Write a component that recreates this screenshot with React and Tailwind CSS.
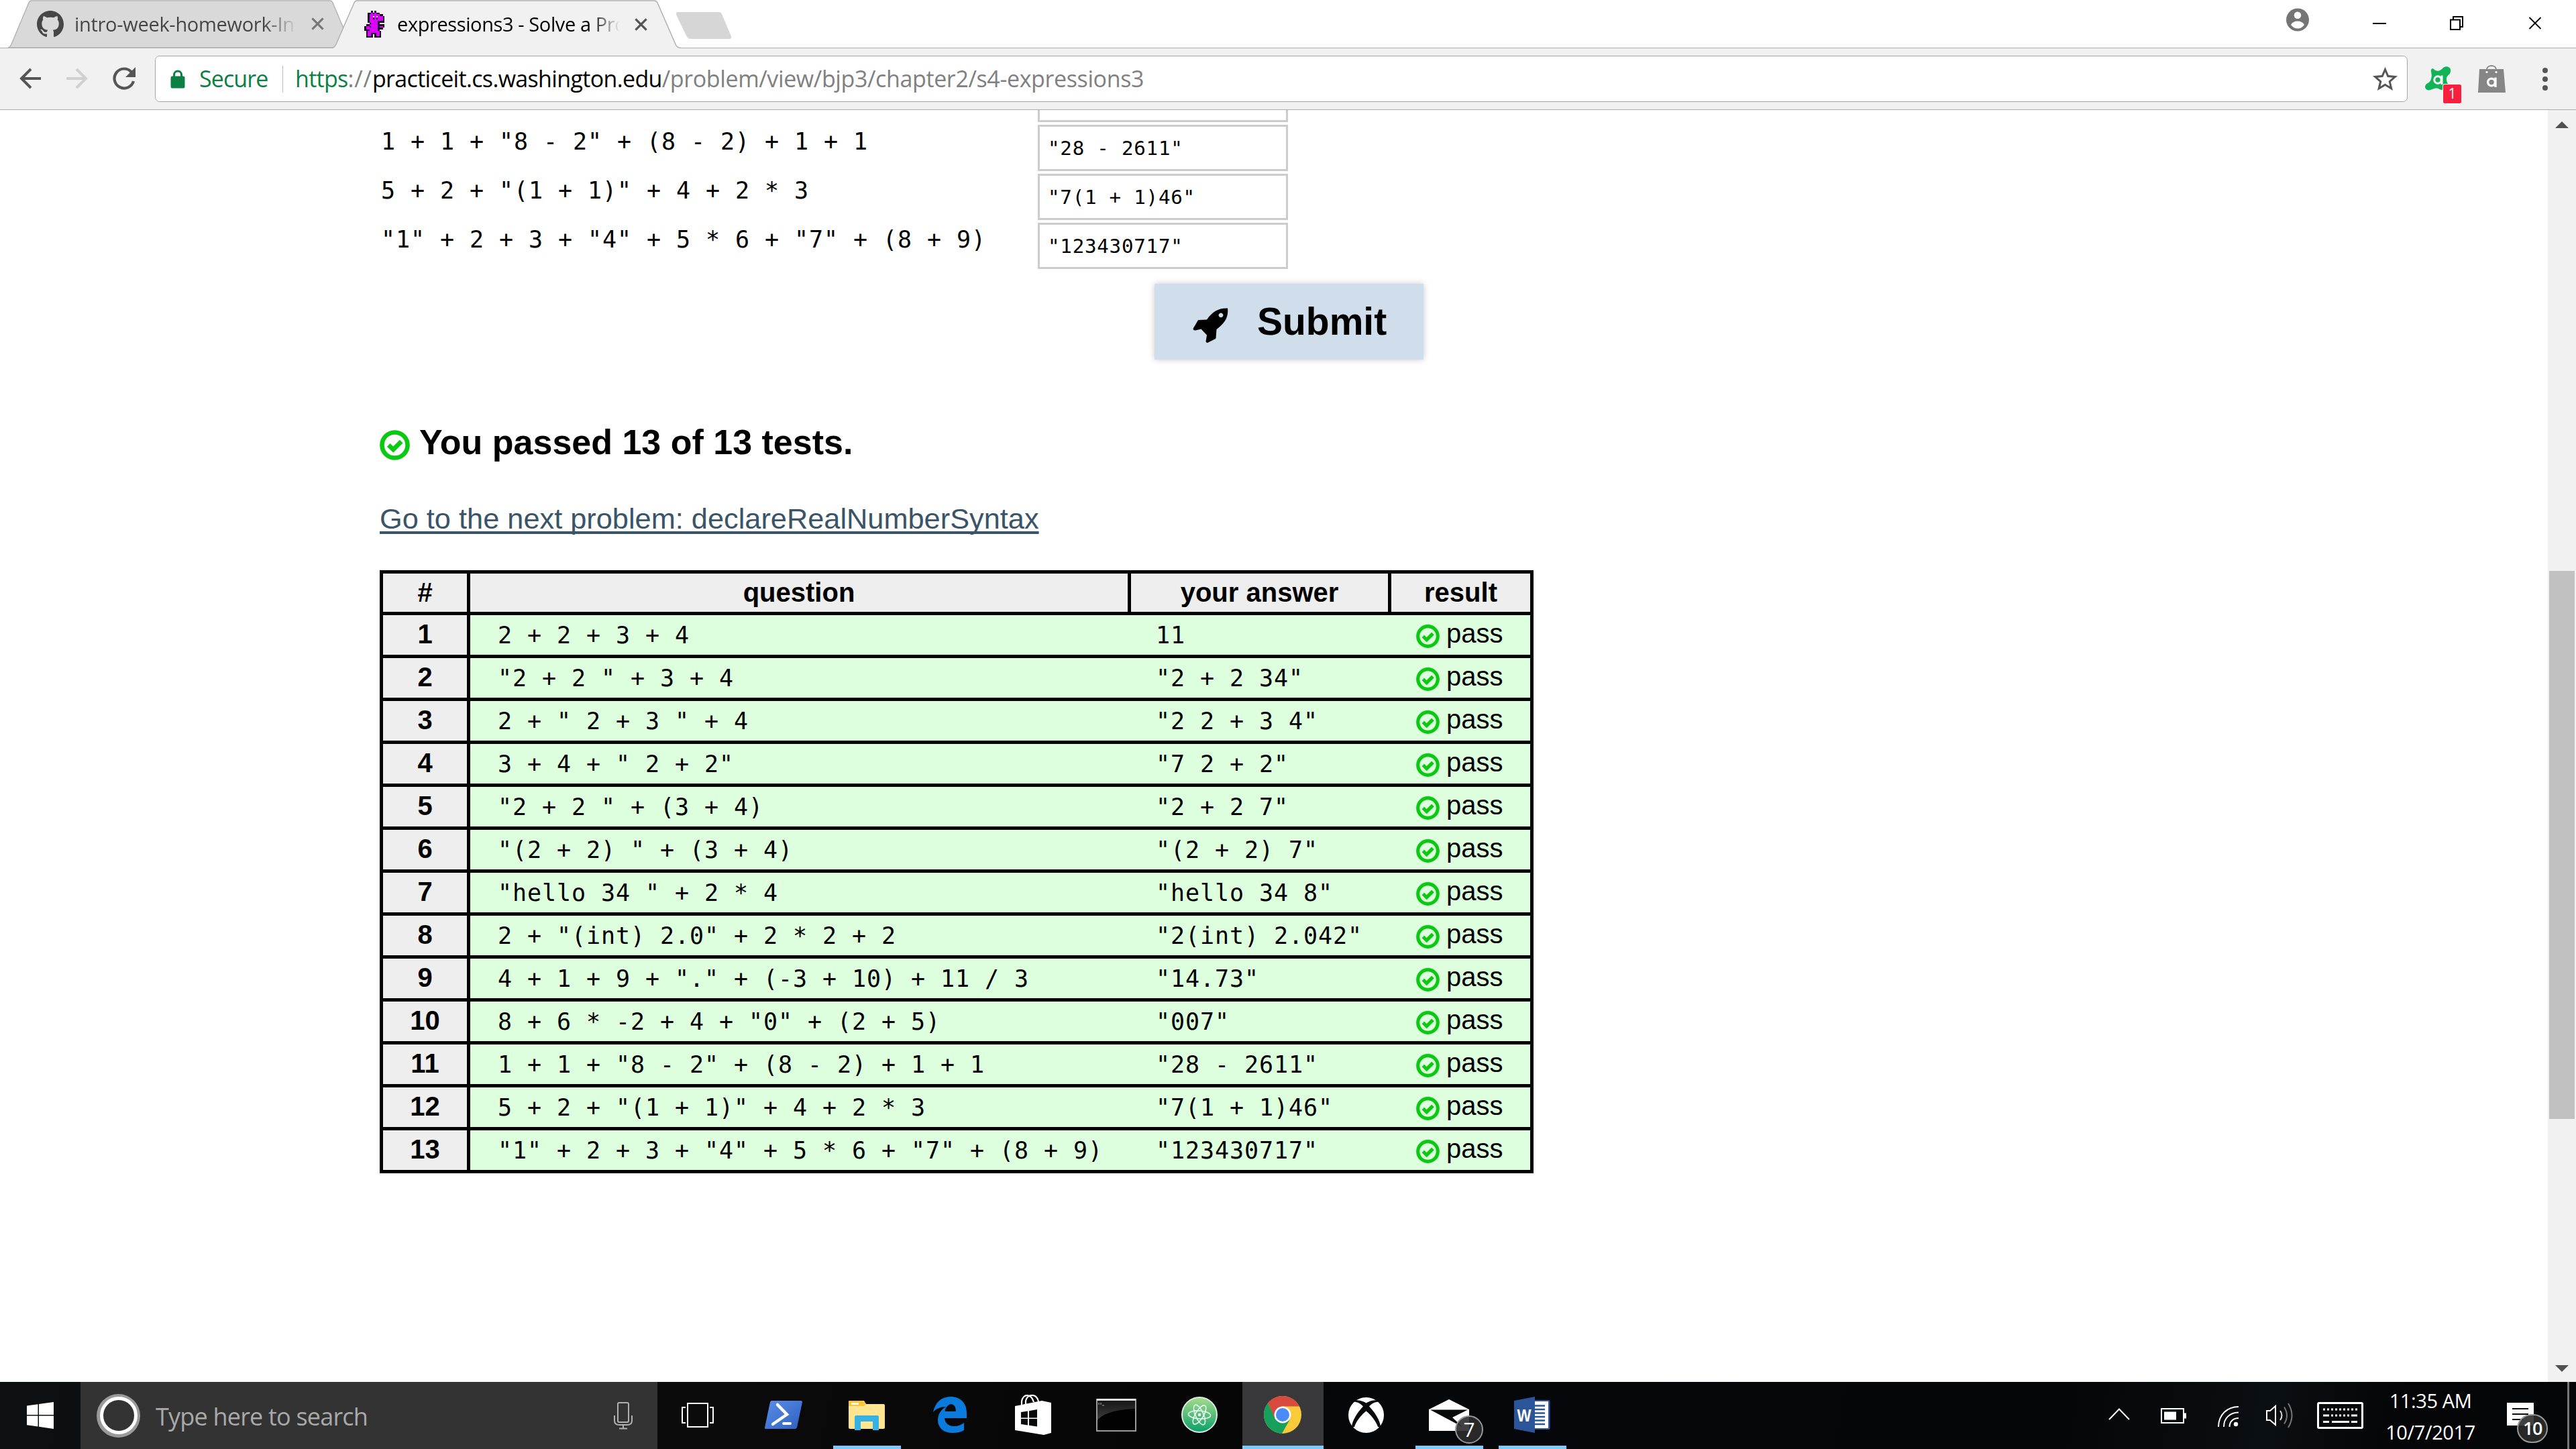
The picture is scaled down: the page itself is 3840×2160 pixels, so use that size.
import React from "react";

const UI = "font-['Open_Sans','Noto_Sans',sans-serif]";
const MONO = "font-['DejaVu_Sans_Mono','Liberation_Mono',monospace]";
const ARIAL = "font-['Liberation_Sans',Arial,sans-serif]";

const INPUT_ROWS = [
  ['1 + 1 + "8 - 2" + (8 - 2) + 1 + 1', '"28 - 2611"'],
  ['5 + 2 + "(1 + 1)" + 4 + 2 * 3', '"7(1 + 1)46"'],
  ['"1" + 2 + 3 + "4" + 5 * 6 + "7" + (8 + 9)', '"123430717"'],
];

const RESULTS = [
  ["2 + 2 + 3 + 4", "11"],
  ['"2 + 2 " + 3 + 4', '"2 + 2 34"'],
  ['2 + " 2 + 3 " + 4', '"2 2 + 3 4"'],
  ['3 + 4 + " 2 + 2"', '"7 2 + 2"'],
  ['"2 + 2 " + (3 + 4)', '"2 + 2 7"'],
  ['"(2 + 2) " + (3 + 4)', '"(2 + 2) 7"'],
  ['"hello 34 " + 2 * 4', '"hello 34 8"'],
  ['2 + "(int) 2.0" + 2 * 2 + 2', '"2(int) 2.042"'],
  ['4 + 1 + 9 + "." + (-3 + 10) + 11 / 3', '"14.73"'],
  ['8 + 6 * -2 + 4 + "0" + (2 + 5)', '"007"'],
  ...INPUT_ROWS,
];

const SPRITE = [
  "....X.X.....",
  "..XXoXoXX...",
  "..XooooooXX.",
  "..XooWoWoooX",
  "..XooXoXoooX",
  "..XooooooooX",
  "..XoooooXXXX",
  "...XooooX...",
  ".XXoooooXXXX",
  "XooXooooXooX",
  "XoooooooXXX.",
  "XXXoooooX...",
  ".XoooooooX..",
  ".XooXXXooX..",
  ".XooX.XooX..",
  ".XXXX.XXXX..",
];
const SPRITE_FILL = { X: "#1a0020", o: "#dd00ff", W: "#ffffff" };

function Sprite() {
  return (
    <svg className="h-[40px] w-[30px] shrink-0" viewBox="0 0 12 16" shapeRendering="crispEdges">
      {SPRITE.flatMap((row, y) =>
        [...row].map((c, x) => (SPRITE_FILL[c] ? <rect key={x + "-" + y} x={x} y={y} width="1.02" height="1.02" fill={SPRITE_FILL[c]} /> : null))
      )}
    </svg>
  );
}

function GitHub() {
  return (
    <svg className="h-[40px] w-[40px] shrink-0" viewBox="0 0 16 16" fill="#474747">
      <path d="M8 0C3.58 0 0 3.58 0 8c0 3.54 2.29 6.53 5.47 7.59.4.07.55-.17.55-.38 0-.19-.01-.82-.01-1.49-2.01.37-2.53-.49-2.69-.94-.09-.23-.48-.94-.82-1.13-.28-.15-.68-.52-.01-.53.63-.01 1.08.58 1.23.82.72 1.21 1.87.87 2.33.66.07-.52.28-.87.51-1.07-1.78-.2-3.64-.89-3.64-3.95 0-.87.31-1.59.82-2.15-.08-.2-.36-1.02.08-2.12 0 0 .67-.21 2.2.82.64-.18 1.32-.27 2-.27s1.36.09 2 .27c1.53-1.04 2.2-.82 2.2-.82.44 1.1.16 1.92.08 2.12.51.56.82 1.27.82 2.15 0 3.07-1.87 3.75-3.65 3.95.29.25.54.73.54 1.48 0 1.07-.01 1.93-.01 2.2 0 .21.15.46.55.38A8.01 8.01 0 0 0 16 8c0-4.42-3.58-8-8-8z" />
    </svg>
  );
}

function CloseX({ className, color, w }) {
  return (
    <svg className={className} viewBox="0 0 20 20" stroke={color} strokeWidth={w} fill="none">
      <path d="M1.5 1.5L18.5 18.5M18.5 1.5L1.5 18.5" />
    </svg>
  );
}

function TabStrip() {
  return (
    <div className="flex h-[72px] items-start bg-[linear-gradient(to_bottom,#fff_71px,#aeaeae_71px)]">
      <div className="relative ml-[12px] h-[71px] w-[510px] shrink-0">
        <svg className="absolute inset-0 h-full w-full" viewBox="0 0 510 71">
          <path d="M0 71C3 70 4 68 5 66L31 4C32 2 33 1 35 1H480C482 1 483 2 484 4L510 66V71Z" fill="#d9d9d9" stroke="#b4b4b4" strokeWidth="1.5" />
        </svg>
        <div className="relative flex h-[71px] items-center pl-[43px]">
          <GitHub />
          <span className={`ml-[16px] w-[336px] whitespace-nowrap bg-[linear-gradient(to_right,#444_84%,transparent_99%)] bg-clip-text text-[29px] tracking-[-0.3px] text-transparent ${UI}`}>
            intro-week-homework-In
          </span>
          <CloseX className="ml-[17px] h-[19px] w-[19px]" color="#777" w="3.2" />
        </div>
      </div>
      <div className="relative -ml-[26px] h-[72px] w-[519px] shrink-0">
        <svg className="absolute inset-0 h-full w-full" viewBox="0 0 519 72">
          <path d="M0 72C3 70 4 68 5 66L32 4C33 2 34 1 36 1H479C481 1 483 2 484 4L511 66C512 69 514 71 519 72Z" fill="#f1f1f1" />
          <path d="M0 71.5C3 70 4 68 5 66L32 4C33 2 34 1 36 1H479C481 1 483 2 484 4L511 66C512 69 514 71 519 71.5" fill="none" stroke="#b0b0b0" strokeWidth="1.5" />
        </svg>
        <div className="relative flex h-[72px] items-center pl-[47px]">
          <Sprite />
          <span className={`ml-[19px] w-[346px] whitespace-nowrap bg-[linear-gradient(to_right,#000_83%,transparent_96%)] bg-clip-text text-[29px] tracking-[-0.4px] text-transparent ${UI}`}>
            expressions3 - Solve a Pro
          </span>
          <CloseX className="ml-[8px] h-[19px] w-[19px]" color="#555" w="3.4" />
        </div>
      </div>
      <svg className="-ml-[8px] mt-[18px] h-[41px] w-[84px]" viewBox="0 0 84 41">
        <path d="M3 0H65Q68 0 69 3L83 36Q84 40 80 40H23Q19 40 17 37L1 4Q0 0 3 0Z" fill="#d6d6d6" />
      </svg>
      <div className="ml-auto flex items-start pr-[51px]">
        <svg className="mt-[12px] mr-[95px] h-[35px] w-[34px]" viewBox="0 0 34 35">
          <circle cx="17" cy="17.5" r="17" fill="#757575" />
          <circle cx="17" cy="10.8" r="5.3" fill="#fff" />
          <path d="M7 25Q10 19.5 17 19.5T27 25Q23 30.5 17 30.5T7 25Z" fill="#fff" />
        </svg>
        <div className="mt-[34px] mr-[95px] h-[2px] w-[20px] bg-black" />
        <svg className="mt-[24px] mr-[97px] h-[21px] w-[20px]" viewBox="0 0 20 21" fill="none" stroke="#000" strokeWidth="2">
          <path d="M1 5.5H15V20H1ZM5 5V1H19V16H15" />
        </svg>
        <CloseX className="mt-[24px] h-[21px] w-[20px]" color="#000" w="1.8" />
      </div>
    </div>
  );
}

function Toolbar() {
  return (
    <div className="flex h-[92px] items-center border-b border-[#ababab] bg-[#f1f1f1]">
      <svg className="ml-[29px] -mt-[1px] h-[32px] w-[33px]" viewBox="0 0 33 32" fill="none" stroke="#555" strokeWidth="4">
        <path d="M32 16H3M17 2L3 16L17 30" />
      </svg>
      <svg className="ml-[36px] -mt-[1px] h-[32px] w-[33px]" viewBox="0 0 33 32" fill="none" stroke="#d0d0d0" strokeWidth="4">
        <path d="M1 16H30M16 2L30 16L16 30" />
      </svg>
      <svg className="ml-[37px] -mt-[1px] h-[34px] w-[34px]" viewBox="0 0 34 34" fill="none" stroke="#555" strokeWidth="4.2">
        <path d="M28 7.5A14.5 14.5 0 1 0 31 21" />
        <path d="M34 0V15H19Z" fill="#555" stroke="none" />
      </svg>
      <div className={`ml-[29px] flex h-[69px] w-[3358px] items-center rounded-[7px] border border-[#a6a6a6] bg-white text-[34px] ${UI}`}>
        <svg className="ml-[22px] h-[28px] w-[22px]" viewBox="0 0 22 28">
          <path d="M5.5 11V7.5a5.5 5.5 0 0 1 11 0V11" fill="none" stroke="#0b8043" strokeWidth="3" />
          <rect x="0.5" y="9.5" width="21" height="18" rx="2.5" fill="#0b8043" />
        </svg>
        <span className="ml-[21px] w-[106px] tracking-[-0.9px] text-[#0b8043]">Secure</span>
        <div className="ml-[18px] h-[40px] w-px bg-[#bbb]" />
        <div className="ml-[18px] flex whitespace-pre">
          <span className="tracking-[-0.7px] text-[#0b8043]">https</span>
          <span className="tracking-[0.8px] text-[#808080]">://</span>
          <span className="tracking-[-0.66px] text-black">practiceit.cs.washington.edu</span>
          <span className="tracking-[-0.38px] text-[#808080]">/problem/view/bjp3/chapter2/s4-expressions3</span>
        </div>
        <svg className="mr-[14px] ml-auto h-[37px] w-[37px]" viewBox="0 0 24 24" fill="#555">
          <path d="M24 9.2l-8.6-.7L12 .5 8.6 8.5 0 9.2l6.5 5.7-2 8.4L12 18.8l7.4 4.5-2-8.4L24 9.2zM12 16.6l-4.5 2.7 1.2-5.1-4-3.4 5.2-.5L12 5.4l2.1 4.9 5.2.5-4 3.4 1.2 5.1z" />
        </svg>
      </div>
      <div className="relative ml-[26px] h-[40px] w-[40px]">
        <svg className="absolute inset-0 h-[40px] w-[40px]" viewBox="0 0 40 40">
          <path d="M9 9C8 4 12 3 14 6C18 9 23 8 27 3C32-1 39 2 38 8C38 14 31 14 32 21C32 26 38 30 34 33C28 35 25 38 20 34C12 32 9 38 3 36C-2 33 0 28 4 26C9 24 11 16 9 9Z" fill="#10b457" />
          <circle cx="19" cy="21" r="5.2" fill="none" stroke="#fff" strokeWidth="3" />
          <path d="M25 14.5V28" stroke="#fff" strokeWidth="3" />
        </svg>
        <div className={`absolute top-[27px] left-[26px] flex h-[30px] w-[29px] items-center justify-center rounded-[3px] border border-white bg-[#f8203e] text-[21px] text-white ${UI}`}>1</div>
      </div>
      <svg className="ml-[39px] h-[42px] w-[41px]" viewBox="0 0 41 42">
        <path d="M2 6H38L41 41H0Z" fill="#868686" />
        <path d="M13 10V7C13-1 27-1 27 7V10" fill="none" stroke="#868686" strokeWidth="2" />
        <circle cx="13" cy="10.5" r="1.6" fill="#fff" />
        <circle cx="27" cy="10.5" r="1.6" fill="#fff" />
        <circle cx="20" cy="25.5" r="5.4" fill="none" stroke="#fff" strokeWidth="3.3" />
        <path d="M26 18.5V33" stroke="#fff" strokeWidth="3.3" />
      </svg>
      <div className="ml-[55px] flex flex-col gap-[5px]">
        <div className="h-[8px] w-[8px] rounded-full bg-[#555]" />
        <div className="h-[8px] w-[8px] rounded-full bg-[#555]" />
        <div className="h-[8px] w-[8px] rounded-full bg-[#555]" />
      </div>
    </div>
  );
}

function CheckIcon({ className }) {
  return (
    <svg className={className} viewBox="0 0 34 34" fill="none" stroke="#0bc912">
      <circle cx="17" cy="17" r="14.4" strokeWidth="5" />
      <path d="M10 17L15.3 22L24.3 13" strokeWidth="5" />
    </svg>
  );
}

function Problem() {
  return (
    <div className={`flex min-w-0 flex-1 flex-col pl-[566px] text-black ${ARIAL}`}>
      <div className="flex flex-col gap-[4px]">
        <div className="ml-[981px] h-[18px] w-[373px] border-[3px] border-t-0 border-[#ccc]" />
        {INPUT_ROWS.map(([q, a]) => (
          <div key={q} className={`flex h-[69px] items-start whitespace-pre ${MONO}`}>
            <span className="w-[981px] pl-[2px] text-[35px] leading-[50px] tracking-[0.93px]">{q}</span>
            <div className="flex h-[69px] w-[373px] items-center border-[3px] border-[#ccc] pt-[2px] pl-[12px] text-[29.2px] tracking-[0.75px]">{a}</div>
          </div>
        ))}
      </div>
      <div className="mt-[22px] ml-[1155px] flex h-[113px] w-[401px] items-center bg-[#cfdeea] pl-[57px] shadow-[0_0_9px_rgba(0,0,0,0.22)]">
        <svg className="mt-[10px] h-[52px] w-[53px]" viewBox="0 0 53 52">
          <path fillRule="evenodd" d="M52 .5C54 15 46 24 35.500 32L34.500 45Q34 46 33 46.500L22 52Q20 52 19.500 50L21 40.500L12.500 31.500L4 33.500Q1 34 .5 31L7.500 19Q8 18 9 18L21 17.500C29 6 38 0 52 .5ZM42 7.500a3.400 3.400 0 1 0 .01 0Z" />
        </svg>
        <span className="ml-[43px] -mt-[2px] text-[57px] leading-[60px] font-bold">Submit</span>
      </div>
      <div className="mt-[93px] flex h-[60px] items-center">
        <CheckIcon className="mt-[9px] h-[45px] w-[45px]" />
        <span className="ml-[14px] text-[52px] font-bold whitespace-nowrap">You passed 13 of 13 tests.</span>
      </div>
      <a className="mt-[59px] flex h-[50px] items-center self-start text-[43.33px] whitespace-nowrap text-[#3a5469] underline decoration-[4px] underline-offset-[4px] [text-decoration-skip-ink:none]">
        Go to the next problem: declareRealNumberSyntax
      </a>
      <div className="mt-[52px] flex w-[1720px] flex-col border-[5px] border-black text-[40px]">
        <div className="flex h-[57px] bg-[#eee] text-center leading-[57px] font-bold">
          <div className="w-[130px] border-r-[5px] border-black">#</div>
          <div className="w-[985px] border-r-[5px] border-black">question</div>
          <div className="w-[388px] border-r-[5px] border-black">your answer</div>
          <div className="w-[207px]">result</div>
        </div>
        {RESULTS.map(([q, a], i) => (
          <div key={i} className="flex h-[64px] border-t-[5px] border-black bg-[#ddffdd] whitespace-pre">
            <div className="w-[130px] border-r-[5px] border-black bg-[#eee] text-center leading-[56px] font-bold">{i + 1}</div>
            <div className={`w-[985px] pl-[41px] text-[35px] leading-[61px] tracking-[0.93px] ${MONO}`}>{q}</div>
            <div className={`w-[388px] pl-[37px] text-[35px] leading-[61px] tracking-[0.93px] ${MONO}`}>{a}</div>
            <div className="flex items-start pl-[37px]">
              <CheckIcon className="mt-[14px] h-[35px] w-[35px]" />
              <span className="ml-[10px] leading-[55px]">pass</span>
            </div>
          </div>
        ))}
      </div>
    </div>
  );
}

function Scrollbar() {
  return (
    <div className="flex w-[42px] shrink-0 flex-col items-center bg-[#f1f1f1]">
      <svg className="mt-[17px] h-[10px] w-[20px]" viewBox="0 0 20 10"><path d="M0 10L10 0L20 10Z" fill="#505050" /></svg>
      <div className="mt-[660px] h-[817px] w-[38px] bg-[#c1c1c1]" />
      <svg className="mt-auto mb-[15px] h-[10px] w-[20px]" viewBox="0 0 20 10"><path d="M0 0L10 10L20 0Z" fill="#505050" /></svg>
    </div>
  );
}

function Slot({ children, active, open }) {
  return (
    <div className="flex h-full w-[124px] shrink-0 flex-col items-center">
      <div className={`flex min-h-0 items-center justify-center pt-[3px] ${active ? "h-[95px] w-[121px] bg-[#39393b]" : "h-[95px] w-[101px]"}`}>{children}</div>
      {(open || active) && <div className={`h-[5px] bg-[#7ecbfb] ${active ? "w-[121px]" : "w-[101px]"}`} />}
    </div>
  );
}

function Badge({ children, className }) {
  return (
    <div className={`absolute flex items-center justify-center rounded-full border-2 border-[#999] bg-[#2c2c2c]/90 text-white ${UI} ${className}`}>{children}</div>
  );
}

function TaskApps() {
  return (
    <>
      <div className="flex h-full w-[126px] shrink-0 items-center justify-center pr-[6px]">
        <svg className="h-[38px] w-[48px]" viewBox="0 0 48 38" fill="none" stroke="#fff" strokeWidth="2">
          <path d="M9 1H39V36H9ZM6 7H1V30H6M42 7H47V30H42" />
        </svg>
      </div>
      <Slot>
        <svg className="h-[42px] w-[56px]" viewBox="0 0 56 42">
          <defs><linearGradient id="ps" x1="0" y1="0" x2="1" y2="1"><stop offset="0" stopColor="#5a8ee6" /><stop offset="1" stopColor="#2f5fc0" /></linearGradient></defs>
          <path d="M10 0H54Q56 0 56 2L48 40Q47 42 45 42H1Q0 42 0 40L8 2Q9 0 10 0Z" fill="url(#ps)" />
          <path d="M19 6L33 20.500L12 35" fill="none" stroke="#fff" strokeWidth="4.500" strokeLinecap="round" />
          <path d="M28 34H38" stroke="#fff" strokeWidth="4" strokeLinecap="round" />
        </svg>
      </Slot>
      <Slot open>
        <svg className="h-[45px] w-[54px]" viewBox="0 0 54 45">
          <path d="M1 1H23L26 6H52Q54 6 54 8V41Q54 43 52 43H2Q0 43 0 41V2Z" fill="#ffe58f" />
          <path d="M1 1H22L26 6L23 9H0V2Z" fill="#fbc73a" />
          <rect x="4" y="4" width="11" height="3" fill="#fff" />
          <path d="M9 45V25Q9 23 11 23H43Q45 23 45 25V45H36V32H18V45Z" fill="#35b1e6" />
        </svg>
      </Slot>
      <Slot>
        <svg className="h-[54px] w-[50px]" viewBox="0 0 50 54">
          <path fillRule="evenodd" d="M0 23C3 9 12 0 26 0C41 0 50 10 50 24V32H17C18 41 25 44 31 44C37 44 42 42 46 39V50C41 53 35 54 29 54C15 54 7 46 7 35C7 26 12 19 19 15C11 15 4 18 0 23ZM17.500 22H34C34 15 31 11 26 11C21 13 18 17 17.500 22Z" fill="#0a7bdc" />
        </svg>
      </Slot>
      <Slot>
        <svg className="h-[60px] w-[54px]" viewBox="0 0 54 60">
          <path d="M0 17L40 9L54 12V57L43 60L0 53Z" fill="#fff" />
          <path d="M10 16V10C12-2 24-2 28 11M16 14V9C19-2 32-2 35 10" fill="none" stroke="#fff" strokeWidth="2.200" />
          <path d="M9 26L19 24.500V34.500H9ZM21 24.200L33 22V34.500H21ZM9 36H19V45.500L9 44ZM21 36H33V47.500L21 45.700Z" fill="#08090a" />
        </svg>
      </Slot>
      <Slot>
        <svg className="h-[49px] w-[60px]" viewBox="0 0 60 49">
          <defs><linearGradient id="cmd" x1="0" y1="0" x2="0" y2="1"><stop offset="0" stopColor="#222" /><stop offset="1" stopColor="#666" /></linearGradient></defs>
          <rect x="1" y="1" width="58" height="47" fill="#020202" stroke="#9a9a9a" strokeWidth="2" />
          <path d="M2 2H58V15C30 16 10 22 2 32Z" fill="url(#cmd)" opacity=".6" />
          <path d="M1 1.500H59" stroke="#ddd" strokeWidth="3" />
          <path d="M4 6V9M7 6V9M9 10H12" stroke="#aaa" />
        </svg>
      </Slot>
      <Slot>
        <svg className="h-[54px] w-[54px]" viewBox="0 0 54 54">
          <defs><linearGradient id="atom" x1="0" y1="0" x2="0" y2="1"><stop offset="0" stopColor="#a6dc8c" /><stop offset="1" stopColor="#0a9f6a" /></linearGradient></defs>
          <circle cx="27" cy="27" r="26" fill="url(#atom)" stroke="#dfe9e2" strokeWidth="2" />
          <g fill="none" stroke="#eafaf0" strokeWidth="1.600">
            <ellipse cx="27" cy="27" rx="16.500" ry="6" transform="rotate(4 27 27)" />
            <ellipse cx="27" cy="27" rx="16" ry="6" transform="rotate(66 27 27)" />
            <ellipse cx="27" cy="27" rx="16" ry="6" transform="rotate(121 27 27)" />
          </g>
          <circle cx="27" cy="27" r="2.200" fill="#fff" />
        </svg>
      </Slot>
      <Slot active>
        <svg className="h-[56px] w-[56px]" viewBox="0 0 56 56">
          <circle cx="28" cy="28" r="28" fill="#f9cb3a" />
          <path d="M28 15.500H52.900A28 28 0 0 0 6 10.600L16 34Z" fill="#d94a3e" />
          <path d="M6.100 10.600A28 28 0 0 0 27 56L39 34.500L17 34.500Z" fill="#17a05c" />
          <circle cx="28" cy="28" r="12.500" fill="#fff" />
          <circle cx="28" cy="28" r="10" fill="#4b8bf5" />
        </svg>
      </Slot>
      <Slot>
        <svg className="h-[53px] w-[53px]" viewBox="0 0 53 53">
          <circle cx="26.500" cy="26.500" r="26.500" fill="#fff" />
          <path d="M9 4.500C14 3.500 21 5 26.500 8.500C32 5 39 3.500 44 4.500L46 6.500C40 6 34 10 31 13.500C38 21 48 34 48 45L44 44C41 35 33 25.500 26.500 20.500C20 25.500 12 35 9 44L5 45C5 34 15 21 22 13.500C19 10 13 6 7 6.500Z" fill="#08090a" />
        </svg>
      </Slot>
      <Slot open>
        <div className="relative h-[47px] w-[60px]">
          <svg className="h-[47px] w-[60px]" viewBox="0 0 60 47">
            <path d="M0 15L30 0L60 15V47H0Z" fill="#fff" />
            <path d="M2 15.500H58L35 27L50 41Z" fill="#08090a" />
          </svg>
          <Badge className="top-[24px] left-[39px] h-[42px] w-[42px] text-[30px]">7</Badge>
        </div>
      </Slot>
      <Slot open>
        <svg className="h-[54px] w-[54px]" viewBox="0 0 54 54">
          <rect x="28" y="5" width="25.500" height="44" rx="2" fill="#2a5699" />
          <rect x="30" y="7" width="21" height="40" fill="#fff" />
          <path d="M31 13.500H46M31 19H46M31 24.500H46M31 30H46M31 35.500H46M31 41H46" stroke="#2a5699" strokeWidth="2.400" />
          <path d="M0 6L31 0V54L0 48Z" fill="#2a5699" />
          <text x="15" y="36.500" textAnchor="middle" fontFamily="Liberation Sans" fontWeight="700" fontSize="25" textLength="21" lengthAdjust="spacingAndGlyphs" fill="#fff">W</text>
        </svg>
      </Slot>
    </>
  );
}

function Tray() {
  return (
    <div className="ml-auto flex h-full items-center">
      <svg className="mr-[46px] mt-[-5px] h-[18px] w-[32px]" viewBox="0 0 32 18" fill="none" stroke="#fff" strokeWidth="2"><path d="M1 17L16 1.500L31 17" /></svg>
      <svg className="mr-[47px] h-[23px] w-[38px]" viewBox="0 0 38 23">
        <path d="M1 1H34V22H1Z" fill="none" stroke="#fff" strokeWidth="2" />
        <rect x="5" y="5.500" width="18" height="12" fill="#fff" /><rect x="35" y="7.500" width="3" height="8" fill="#fff" />
      </svg>
      <svg className="mr-[41px] mt-[3px] h-[31px] w-[31px]" viewBox="0 0 31 31" fill="none" stroke="#fff" strokeWidth="2">
        <path d="M1 31C1 13 14 1 31 1M9 31C9 18 18 9.500 31 9.500M17.500 31C17.500 23 23 18 31 18" /><circle cx="27" cy="27" r="3.200" fill="#fff" stroke="none" />
      </svg>
      <svg className="mr-[35px] h-[38px] w-[41px]" viewBox="0 0 41 38" fill="none" strokeWidth="2">
        <path d="M1 12H6L14 5V33L6 26H1Z" stroke="#fff" /><path d="M21 12Q26 19 21 26" stroke="#ddd" /><path d="M27 6.500Q35 19 27 31.500M33 1Q44 19 33 37" stroke="#777" />
      </svg>
      <svg className="mr-[31px] h-[40px] w-[69px]" viewBox="0 0 69 40" fill="none" stroke="#fff">
        <rect x="1.500" y="1.500" width="66" height="37" rx="1.500" strokeWidth="3" />
        <path d="M9 11H60" strokeWidth="3" strokeDasharray="3 3" /><path d="M9 20H18M51 20H60M9 29.500H18M22 29.500H48M51 29.500H60" strokeWidth="3" /><path d="M21 20H48" strokeWidth="3" strokeDasharray="3 3" />
      </svg>
      <div className={`mt-[3px] flex w-[138px] flex-col text-center text-[29px] leading-[46.700px] tracking-[-0.4px] whitespace-nowrap text-white ${UI}`}>
        <span>11:35 AM</span>
        <span>10/7/2017</span>
      </div>
      <div className="relative ml-[45px] -mt-[4px] h-[34px] w-[60px]">
        <svg className="h-[34px] w-[41px]" viewBox="0 0 41 34"><path d="M0 0H40V34H0Z" fill="#fff" /><path d="M8 9H32M8 17H32M8 25H24" stroke="#0c0c0c" strokeWidth="2" /></svg>
        <Badge className="top-[17px] left-[15px] h-[43px] w-[46px] text-[27px] font-semibold tracking-[-1.500px]">10</Badge>
      </div>
      <div className="ml-[30px] mr-[10px] h-full w-[3px] bg-[#777]" />
    </div>
  );
}

function Taskbar() {
  return (
    <div className="flex h-[100px] items-center bg-[linear-gradient(100deg,#0c1013_0%,#0b0b0b_27%,#060606_45%,#05070a_60%,#050607_80%,#0a0f13_88%,#040506_93%)]">
      <div className="flex w-[120px] justify-center">
        <svg className="h-[40px] w-[40px]" viewBox="0 0 40 40" fill="#fff"><path d="M0 5.500L16.500 3.200V19H0ZM18 3L40 0V19H18ZM0 20.500H16.500V36.500L0 34.300ZM18 20.500H40V40L18 36.800Z" /></svg>
      </div>
      <div className="flex h-full w-[860px] shrink-0 items-center bg-[#333]">
        <div className="ml-[24px] flex h-[65px] w-[65px] items-center justify-center rounded-full bg-[#9a9a9a]">
          <div className="h-[56px] w-[56px] rounded-full border-[5px] border-white bg-[#333]" />
        </div>
        <span className={`mt-[4px] ml-[23px] text-[36px] tracking-[-0.8px] text-[#a9a9a9] ${UI}`}>Type here to search</span>
        <svg className="mr-[37px] ml-auto h-[41px] w-[28px]" viewBox="0 0 28 41" fill="none" stroke="#b0b0b0" strokeWidth="2">
          <rect x="6" y="1" width="16" height="29" rx="2" /><path d="M1 20V28Q1 34 8 34H20Q27 34 27 28V20M14 34V39M8 39.500H20" />
        </svg>
      </div>
      <TaskApps />
      <Tray />
    </div>
  );
}

export default function App() {
  return (
    <div className="flex h-[2160px] w-[3840px] flex-col overflow-hidden bg-white">
      <TabStrip />
      <Toolbar />
      <div className="flex h-[1896px] overflow-hidden">
        <Problem />
        <Scrollbar />
      </div>
      <Taskbar />
    </div>
  );
}
